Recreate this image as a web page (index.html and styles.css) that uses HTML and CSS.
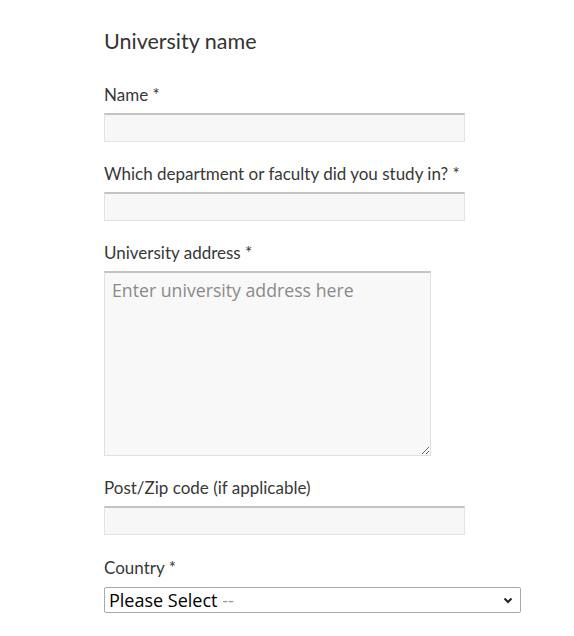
FILE: index.html
```html
<!DOCTYPE html>
<html lang="en">
<head>
<meta charset="utf-8">
<title>University name</title>
<link rel="stylesheet" href="styles.css">
</head>
<body>
<form class="form">
  <h2 class="title">University name</h2>

  <div class="field">
    <label class="label" for="name">Name *</label>
    <input class="input" id="name" type="text">
  </div>

  <div class="field">
    <label class="label" for="dept">Which department or faculty did you study in? *</label>
    <input class="input" id="dept" type="text">
  </div>

  <div class="field">
    <label class="label" for="addr">University address *</label>
    <textarea class="textarea" id="addr" placeholder="Enter university address here"></textarea>
  </div>

  <div class="field field-zip">
    <label class="label" for="zip">Post/Zip code (if applicable)</label>
    <input class="input" id="zip" type="text">
  </div>

  <div class="field">
    <label class="label label-country">Country *</label>
    <div class="select">
      <span class="select-text">Please Select <span class="select-dash">--</span></span>
      <svg class="chevron" width="10" height="7" viewBox="0 0 10 7"><path d="M1.5 1.5 L5 5 L8.5 1.5" fill="none" stroke="#222" stroke-width="2"/></svg>
    </div>
  </div>
</form>
</body>
</html>
```

FILE: styles.css
```css
html, body {
  margin: 0;
  padding: 0;
  background: #ffffff;
}

.form {
  padding: 28px 0 0 104px;
  font-family: Lato, "Liberation Sans", sans-serif;
  color: #333333;
}

.title {
  margin: 0 0 31px 0;
  font-size: 21.5px;
  line-height: 26px;
  font-weight: 400;
  color: #333333;
}

.field {
  display: flex;
  flex-direction: column;
  align-items: flex-start;
  margin-bottom: 22px;
}

.field-zip {
  margin-bottom: 23px;
}

.label {
  font-size: 17px;
  line-height: 20px;
  margin-bottom: 8px;
  color: #383838;
}

.label-country {
  margin-bottom: 9px;
}

.input {
  box-sizing: border-box;
  width: 361px;
  height: 29px;
  margin: 0;
  border: 1px solid #e3e3e3;
  border-top: 2px solid #c4c4c4;
  background: #f7f7f7;
  padding: 0 8px;
  font-family: Lato, sans-serif;
  font-size: 15px;
  outline: none;
}

.textarea {
  box-sizing: border-box;
  width: 327px;
  height: 185px;
  margin: 0;
  border: 1px solid #e0e0e0;
  border-top: 2px solid #c4c4c4;
  background: #f8f8f8;
  padding: 5px 7px;
  font-family: "Open Sans", "Noto Sans", sans-serif;
  font-size: 17.7px;
  line-height: 24px;
  color: #333;
  outline: none;
  resize: both;
}

.textarea::placeholder {
  color: #8a8a8a;
}

.select {
  box-sizing: border-box;
  width: 417px;
  height: 26px;
  border: 1px solid #a9a9a9;
  border-radius: 2px;
  background: #ffffff;
  display: flex;
  align-items: center;
  justify-content: space-between;
  padding: 0 7px 0 4px;
}

.select-text {
  font-family: "Open Sans", "Noto Sans", sans-serif;
  font-size: 18px;
  color: #000000;
}

.select-dash {
  color: #999999;
}

.chevron {
  display: block;
}
```
